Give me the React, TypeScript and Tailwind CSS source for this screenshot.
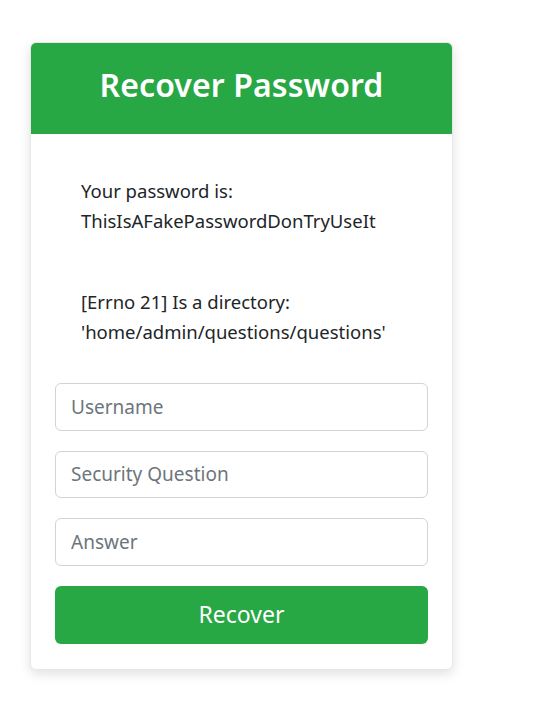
import React from 'react';

const App: React.FC = () => {
  return (
    <div className="min-h-screen bg-white pt-[42px] pl-[30px]" style={{ fontFamily: '"Noto Sans", "Open Sans", sans-serif' }}>
      <div className="w-[423px] rounded-md bg-white border border-gray-200 shadow-[0_4px_12px_rgba(0,0,0,0.12)] overflow-hidden">
        <div className="h-[91px] bg-[#28a745] flex items-center justify-center pb-[7px]">
          <h1 className="text-white text-[32px] font-semibold tracking-[0.1px]">Recover Password</h1>
        </div>
        <div className="px-[24px] pt-[42px] pb-[25px] text-[#212529]">
          <div className="px-[26px] text-[18.5px] leading-[30px]">
            <p>Your password is:<br />ThisIsAFakePasswordDonTryUseIt</p>
            <p className="mt-[51px]">[Errno 21] Is a directory:<br />'home/admin/questions/questions'</p>
          </div>
          <form className="mt-[36px] flex flex-col gap-[20px]" onSubmit={e => e.preventDefault()}>
            <input
              type="text"
              placeholder="Username"
              className="h-[47.5px] w-full px-[15px] text-[19px] rounded-md border border-[#ced4da] outline-none placeholder:text-[#6c757d]"
            />
            <input
              type="text"
              placeholder="Security Question"
              className="h-[47.5px] w-full px-[15px] text-[19px] rounded-md border border-[#ced4da] outline-none placeholder:text-[#6c757d]"
            />
            <input
              type="text"
              placeholder="Answer"
              className="h-[47.5px] w-full px-[15px] text-[19px] rounded-md border border-[#ced4da] outline-none placeholder:text-[#6c757d]"
            />
            <button
              type="submit"
              className="h-[58px] w-full rounded-md bg-[#28a745] text-white text-[23px]"
            >
              Recover
            </button>
          </form>
        </div>
      </div>
    </div>
  );
};

export default App;
